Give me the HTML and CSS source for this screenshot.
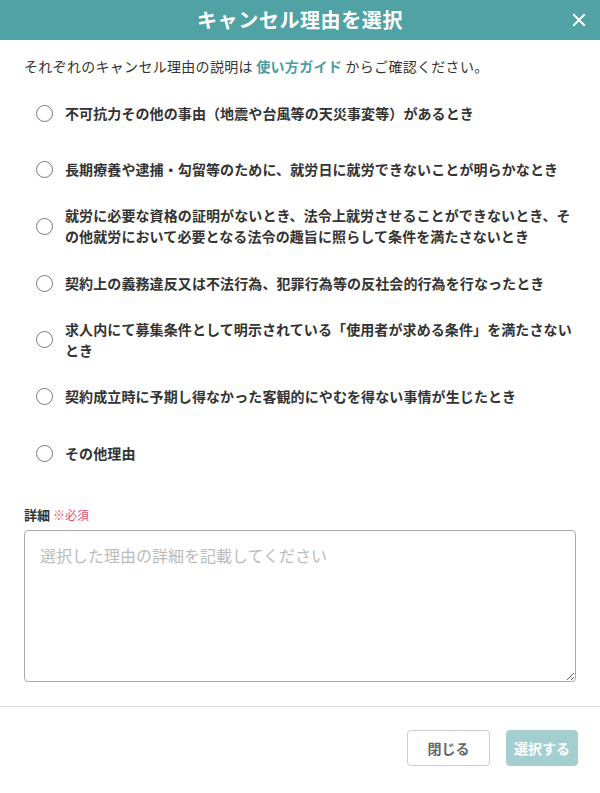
FILE: index.html
```html
<!DOCTYPE html>
<html lang="ja">
<head>
<meta charset="utf-8">
<link rel="stylesheet" href="styles.css">
</head>
<body>
<div class="modal">
  <header class="modal-header">
    <h1 class="modal-title">キャンセル理由を選択</h1>
    <button class="close-btn" aria-label="閉じる">
      <svg width="14" height="14" viewBox="0 0 14 14"><path d="M2 2L12 12M12 2L2 12" stroke="#fff" stroke-width="2" stroke-linecap="square"/></svg>
    </button>
  </header>
  <div class="modal-body">
    <p class="intro">それぞれのキャンセル理由の説明は <a class="guide-link" href="#">使い方ガイド</a> からご確認ください。</p>
    <ul class="reasons">
      <li class="reason"><span class="radio"></span><span class="reason-text">不可抗力その他の事由（地震や台風等の天災事変等）があるとき</span></li>
      <li class="reason"><span class="radio"></span><span class="reason-text">長期療養や逮捕・勾留等のために、就労日に就労できないことが明らかなとき</span></li>
      <li class="reason"><span class="radio"></span><span class="reason-text">就労に必要な資格の証明がないとき、法令上就労させることができないとき、その他就労において必要となる法令の趣旨に照らして条件を満たさないとき</span></li>
      <li class="reason"><span class="radio"></span><span class="reason-text">契約上の義務違反又は不法行為、犯罪行為等の反社会的行為を行なったとき</span></li>
      <li class="reason"><span class="radio"></span><span class="reason-text">求人内にて募集条件として明示されている「使用者が求める条件」を満たさないとき</span></li>
      <li class="reason"><span class="radio"></span><span class="reason-text">契約成立時に予期し得なかった客観的にやむを得ない事情が生じたとき</span></li>
      <li class="reason"><span class="radio"></span><span class="reason-text">その他理由</span></li>
    </ul>
    <div class="detail">
      <label class="detail-label">詳細 <span class="required">※必須</span></label>
      <textarea class="detail-input" placeholder="選択した理由の詳細を記載してください"></textarea>
    </div>
  </div>
  <footer class="modal-footer">
    <button class="btn btn-secondary">閉じる</button>
    <button class="btn btn-primary">選択する</button>
  </footer>
</div>
</body>
</html>
```
FILE: styles.css
```css
* { box-sizing: border-box; }
html, body {
  margin: 0;
  padding: 0;
  background: #fff;
}
body {
  font-family: "Noto Sans CJK JP", "Noto Sans", sans-serif;
  color: #333;
}
.modal {
  width: 600px;
  height: 793px;
  display: flex;
  flex-direction: column;
  background: #fff;
}
.modal-header {
  position: relative;
  height: 40px;
  background: #51a2a5;
  display: flex;
  align-items: center;
  justify-content: center;
}
.modal-title {
  margin: 0;
  color: #fff;
  font-size: 20px;
  font-weight: 700;
  line-height: 40px;
  letter-spacing: 0.6px;
}
.close-btn {
  position: absolute;
  right: 14px;
  top: 13px;
  width: 14px;
  height: 14px;
  padding: 0;
  border: 0;
  background: none;
  display: flex;
}
.modal-body {
  padding: 16px 24px 0;
}
.intro {
  margin: 0;
  font-size: 14px;
  line-height: 21px;
  letter-spacing: 0.3px;
  color: #333;
}
.guide-link {
  color: #4a9da1;
  font-weight: 700;
  text-decoration: none;
}
.reasons {
  list-style: none;
  margin: 15px 0 0;
  padding: 0;
  display: flex;
  flex-direction: column;
  gap: 14.7px;
}
.reason {
  min-height: 42px;
  display: flex;
  align-items: center;
  gap: 12px;
  padding-left: 12px;
}
.radio {
  flex: none;
  width: 17px;
  height: 17px;
  border: 1.5px solid #777;
  border-radius: 50%;
  background: #fff;
}
.reason-text {
  font-size: 14px;
  font-weight: 700;
  line-height: 21px;
  letter-spacing: 0.1px;
  color: #333;
}
.detail {
  margin-top: 31px;
}
.detail-label {
  display: block;
  font-size: 13px;
  font-weight: 700;
  line-height: 20px;
  color: #333;
}
.required {
  color: #d9556f;
  font-size: 12px;
  font-weight: 400;
}
.detail-input {
  display: block;
  margin-top: 5px;
  width: 552px;
  height: 152px;
  border: 1px solid #aaa;
  border-radius: 4px;
  padding: 12px 15px;
  font-family: "Noto Sans CJK JP", "Noto Sans", sans-serif;
  font-size: 16px;
  line-height: 24px;
  color: #333;
  resize: vertical;
}
.detail-input::placeholder {
  color: #bbb;
}
.modal-footer {
  margin-top: 24px;
  border-top: 1px solid #ddd;
  padding: 23px 22px 0 0;
  display: flex;
  justify-content: flex-end;
  gap: 16px;
}
.btn {
  height: 36px;
  border-radius: 4px;
  font-family: "Noto Sans CJK JP", "Noto Sans", sans-serif;
  font-size: 14px;
  font-weight: 700;
  padding: 0;
}
.btn-secondary {
  width: 83px;
  background: #fff;
  border: 1px solid #ccc;
  color: #666;
}
.btn-primary {
  width: 72px;
  background: #a3cfd0;
  border: 1px solid #a3cfd0;
  color: #fff;
}
```
